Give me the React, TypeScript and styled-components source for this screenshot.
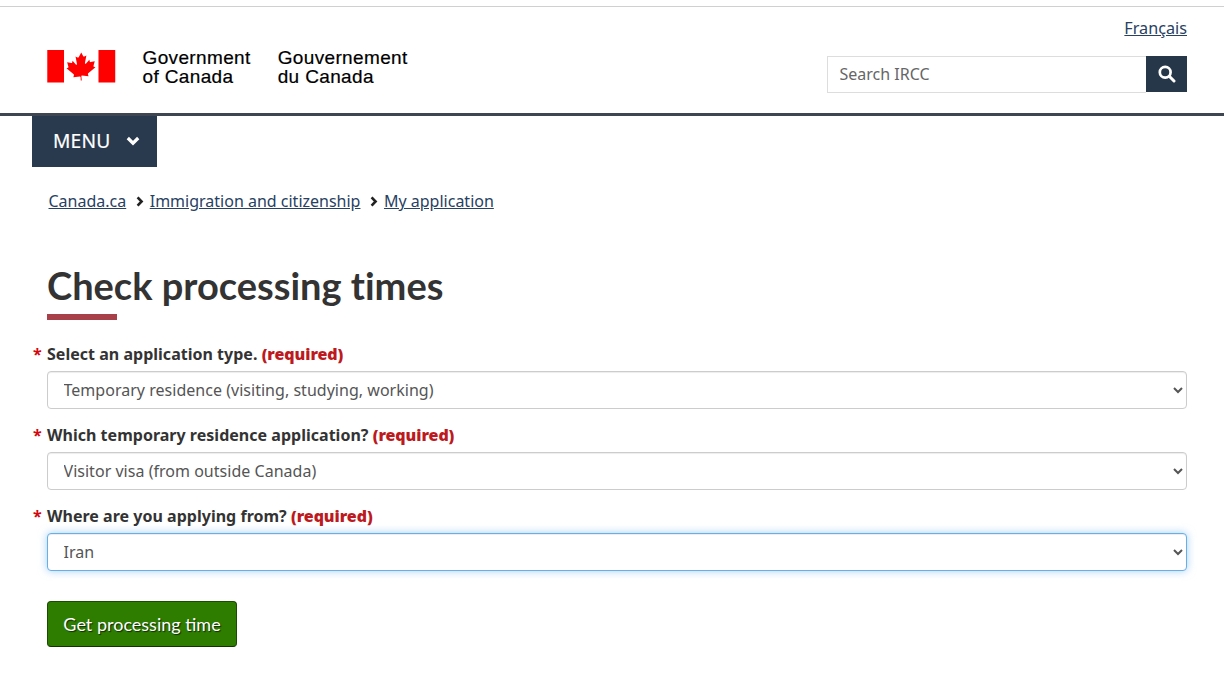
import styled, { createGlobalStyle } from 'styled-components'

const fields = [
  { label: 'Select an application type.', value: 'Temporary residence (visiting, studying, working)' },
  { label: 'Which temporary residence application?', value: 'Visitor visa (from outside Canada)' },
  { label: 'Where are you applying from?', value: 'Iran', focused: true }
]

const crumbs = ['Canada.ca', 'Immigration and citizenship', 'My application']

export default function App() {
  return (
    <>
      <GlobalStyle />

      <Page>
        <Header>
          <Brand>
            <Flag viewBox="0 0 69 33" aria-hidden="true">
              <rect x="0" y="0" width="17" height="33" fill="#ff0000" />
              <rect x="52" y="0" width="17" height="33" fill="#ff0000" />
              <path
                fill="#ff0000"
                d="M34.5 2.5l-2.6 4.8c-.3.5-.8.5-1.3.2l-1.9-1 1.4 7.4c.3 1.3-.6 1.3-1.1.8l-3.3-3.7-.5 1.9c-.1.3-.4.5-.8.4l-4.200-.9 1.100 4c.2.9.4 1.200-.3 1.500l-1.500.7 7.300 5.900c.3.2.4.600.3 1l-.6 2.100 6.700-.8c.3 0 .6.300.6.600L34 31h1l-.4-4.600c0-.3.300-.6.600-.6l6.700.8-.6-2.100c-.1-.4 0-.8.3-1l7.300-5.900-1.500-.7c-.7-.3-.5-.6-.3-1.500l1.100-4-4.200.9c-.4.1-.7-.1-.8-.4l-.5-1.900-3.300 3.700c-.5.500-1.400.500-1.100-.8l1.400-7.400-1.900 1c-.5.300-1 .3-1.300-.2z"
              />
            </Flag>
            <Wordmark>
              <span>Government</span>
              <span>of Canada</span>
            </Wordmark>
            <Wordmark>
              <span>Gouvernement</span>
              <span>du Canada</span>
            </Wordmark>
          </Brand>

          <HeaderTools>
            <LanguageLink href="#">Français</LanguageLink>
            <SearchBar>
              <SearchInput placeholder="Search IRCC" />
              <SearchButton type="button" aria-label="Search">
                <svg width="18" height="18" viewBox="0 0 18 18" aria-hidden="true">
                  <circle cx="7.200" cy="7.200" r="5.400" fill="none" stroke="#ffffff" strokeWidth="2.700" />
                  <path d="M11.300 11.300L16 16" stroke="#ffffff" strokeWidth="3" strokeLinecap="round" />
                </svg>
              </SearchButton>
            </SearchBar>
          </HeaderTools>
        </Header>

        <MenuRow>
          <MenuButton type="button">
            MENU
            <svg width="14" height="10" viewBox="0 0 14 10" aria-hidden="true">
              <path d="M1.800 2L7 7.200L12.200 2" fill="none" stroke="#ffffff" strokeWidth="3.200" />
            </svg>
          </MenuButton>
        </MenuRow>

        <Breadcrumbs>
          {crumbs.map((crumb, index) => (
            <Crumb key={crumb}>
              {index > 0 ? (
                <svg width="8" height="11" viewBox="0 0 8 11" aria-hidden="true">
                  <path d="M1.600 1.300L5.600 5.500L1.600 9.700" fill="none" stroke="#222222" strokeWidth="2.600" />
                </svg>
              ) : null}
              <CrumbLink href="#">{crumb}</CrumbLink>
            </Crumb>
          ))}
        </Breadcrumbs>

        <Main>
          <Title>Check processing times</Title>

          <Form>
            {fields.map((field) => (
              <Field key={field.label}>
                <Label>
                  <Star>*</Star>
                  {field.label} <Required>(required)</Required>
                </Label>
                <Select $focused={field.focused} defaultValue={field.value}>
                  <option>{field.value}</option>
                </Select>
              </Field>
            ))}

            <SubmitButton type="button">Get processing time</SubmitButton>
          </Form>
        </Main>
      </Page>
    </>
  )
}

const GlobalStyle = createGlobalStyle`
  * {
    box-sizing: border-box;
  }

  html, body, #root {
    height: 100%;
  }

  body {
    margin: 0;
    background: #ffffff;
    color: #333333;
    font-family: "Noto Sans", "Liberation Sans", sans-serif;
    font-size: 16px;
    overflow: hidden;
  }
`

const Page = styled.div`
  min-height: 100vh;
  padding-top: 6px;
`

const Header = styled.header`
  height: 110px;
  border-top: 1px solid #d0d0d0;
  border-bottom: 3px solid #3d4651;
  padding: 0 37px 0 47px;
  display: flex;
  justify-content: space-between;
`

const Brand = styled.div`
  display: flex;
  align-items: flex-start;
  padding-top: 41px;
`

const Flag = styled.svg`
  width: 68.5px;
  height: 32.5px;
  margin-top: 2px;
  margin-right: 27px;
`

const Wordmark = styled.div`
  display: flex;
  flex-direction: column;
  margin-right: 27px;
  color: #000000;
  font-family: "Liberation Sans", Arial, sans-serif;
  font-size: 19px;
  letter-spacing: 0.36px;
  line-height: 19px;
  -webkit-text-stroke: 0.2px #000000;
`

const HeaderTools = styled.div`
  width: 360px;
  display: flex;
  flex-direction: column;
  align-items: flex-end;
  padding-top: 10px;
`

const LanguageLink = styled.a`
  color: #284162;
  font-size: 16.2px;
  line-height: 22px;
  text-decoration: underline;
`

const SearchBar = styled.div`
  margin-top: 17px;
  width: 360px;
  height: 37px;
  display: flex;
`

const SearchInput = styled.input`
  flex: 1;
  min-width: 0;
  height: 37px;
  border: 1px solid #dddddd;
  border-right: 0;
  padding: 0 11.5px 2px;
  outline: none;
  color: #555555;
  font-family: "Noto Sans", sans-serif;
  font-size: 16px;

  &::placeholder {
    color: #666666;
    opacity: 1;
  }
`

const SearchButton = styled.button`
  width: 41px;
  height: 36px;
  border: 0;
  padding: 0;
  background: #26374a;
  display: flex;
  align-items: center;
  justify-content: center;
  cursor: pointer;
`

const MenuRow = styled.div`
  padding-left: 32px;
`

const MenuButton = styled.button`
  width: 125px;
  height: 51px;
  border: 0;
  padding: 0 0 2px 21px;
  background: #2a3a4e;
  color: #ffffff;
  display: flex;
  align-items: center;
  gap: 16px;
  font-family: "Noto Sans", sans-serif;
  font-size: 19.2px;
  font-weight: 400;
  letter-spacing: 0.2px;
  -webkit-text-stroke: 0.2px #ffffff;
  cursor: pointer;
`

const Breadcrumbs = styled.nav`
  margin-top: 23px;
  padding-left: 48.5px;
  display: flex;
  gap: 10px;
`

const Crumb = styled.div`
  display: flex;
  align-items: center;
  gap: 5.5px;
  line-height: 23px;
`

const CrumbLink = styled.a`
  color: #284162;
  font-size: 16px;
  text-decoration: underline;
`

const Main = styled.main`
  padding: 49px 37px 0 47px;
`

const Title = styled.h1`
  margin: 0;
  color: #333333;
  font-family: Lato, sans-serif;
  font-size: 38px;
  font-weight: 700;
  font-variant-ligatures: none;
  line-height: 46px;
  position: relative;
  height: 58px;

  &::after {
    content: '';
    position: absolute;
    left: 0;
    bottom: 0;
    width: 70px;
    height: 6px;
    background: #a8404a;
  }
`

const Form = styled.form`
  margin-top: 23px;
  display: flex;
  flex-direction: column;
  gap: 15px;
`

const Field = styled.div`
  display: flex;
  flex-direction: column;
  gap: 6px;
`

const Label = styled.label`
  position: relative;
  color: #333333;
  font-size: 16px;
  font-weight: 700;
  letter-spacing: 0.02px;
  line-height: 22px;
`

const Star = styled.span`
  position: absolute;
  left: -14px;
  top: 0;
  color: #d3080c;
`

const Required = styled.strong`
  color: #bc1a20;
  letter-spacing: -0.05px;
`

const Select = styled.select<{ $focused?: boolean }>`
  width: 100%;
  height: 38px;
  border: 1px solid ${(p) => (p.$focused ? '#66afe9' : '#cccccc')};
  border-radius: 4px;
  padding: 0 11.5px;
  outline: none;
  background: #ffffff;
  color: #555555;
  font-family: "Noto Sans", sans-serif;
  font-size: 16px;
  letter-spacing: 0.025px;
  box-shadow: ${(p) =>
    p.$focused ? 'inset 0 1px 1px rgba(0, 0, 0, 0.075), 0 0 8px rgba(102, 175, 233, 0.6)' : 'inset 0 1px 1px rgba(0, 0, 0, 0.075)'};
`

const SubmitButton = styled.button`
  align-self: flex-start;
  margin-top: 15px;
  width: 190px;
  height: 46px;
  border: 1px solid #1b4c00;
  border-bottom-color: #123400;
  border-radius: 4px;
  background: #2e7d00;
  color: #ffffff;
  font-family: Lato, sans-serif;
  font-size: 18px;
  text-shadow: 1px 1px 1px #0f2c00;
  cursor: pointer;
`
